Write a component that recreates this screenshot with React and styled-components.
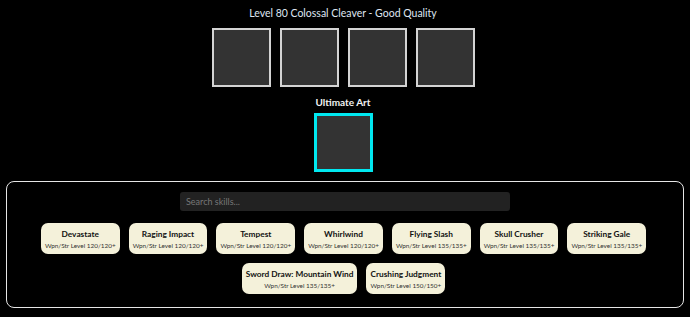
import React from "react";
import styled, { createGlobalStyle } from "styled-components";

const GlobalStyle = createGlobalStyle`
  html, body {
    margin: 0;
    background: #000;
    font-family: Lato, "Open Sans", sans-serif;
  }
`;

const Page = styled.div`
  display: flex;
  flex-direction: column;
  align-items: center;
  padding-top: 6px;
`;

const Header = styled.div`
  display: flex;
  flex-direction: column;
  align-items: center;
  padding-right: 4px;
`;

const Title = styled.div`
  color: #dfe6f2;
  font-size: 10.5px;
  line-height: 14px;
`;

const SlotRow = styled.div`
  display: flex;
  gap: 9px;
  margin-top: 8px;
`;

const Slot = styled.div`
  width: 59px;
  height: 59px;
  box-sizing: border-box;
  background: #333;
  border: ${(p) => (p.ultimate ? "3px solid #00e8f0" : "2px solid #d4d4d4")};
`;

const Label = styled.div`
  color: #f2f2f2;
  font-weight: 700;
  font-size: 10px;
  line-height: 14px;
  margin-top: 8px;
  margin-bottom: 4px;
`;

const Panel = styled.div`
  align-self: stretch;
  margin: 9px 6px 0;
  border: 1.5px solid #e6e6e6;
  border-radius: 8px;
  padding: 10px 20px 13px;
  display: flex;
  flex-direction: column;
  align-items: center;
  gap: 12px;
`;

const Search = styled.input`
  width: 330px;
  height: 19px;
  box-sizing: border-box;
  background: #222;
  border: none;
  border-radius: 3px;
  padding: 0 6px;
  color: #ccc;
  font-family: inherit;
  font-size: 9px;
  outline: none;
  &::placeholder {
    color: #777;
  }
`;

const CardGrid = styled.div`
  display: flex;
  flex-wrap: wrap;
  justify-content: center;
  gap: 9px;
  padding-right: 3px;
`;

const Card = styled.div`
  background: #f4f1da;
  border-radius: 7px;
  padding: 5px 4px 3px;
  display: flex;
  flex-direction: column;
  align-items: center;
  color: #111;
`;

const Name = styled.div`
  font-weight: 700;
  font-size: 8.3px;
  line-height: 12px;
`;

const Req = styled.div`
  font-size: 6.4px;
  line-height: 10px;
  color: #333;
  margin-top: 1px;
`;

const skills = [
  ["Devastate", "Wpn/Str Level 120/120+"],
  ["Raging Impact", "Wpn/Str Level 120/120+"],
  ["Tempest", "Wpn/Str Level 120/120+"],
  ["Whirlwind", "Wpn/Str Level 120/120+"],
  ["Flying Slash", "Wpn/Str Level 135/135+"],
  ["Skull Crusher", "Wpn/Str Level 135/135+"],
  ["Striking Gale", "Wpn/Str Level 135/135+"],
  ["Sword Draw: Mountain Wind", "Wpn/Str Level 135/135+"],
  ["Crushing Judgment", "Wpn/Str Level 150/150+"],
];

export default function App() {
  return (
    <>
      <GlobalStyle />
      <Page>
        <Header>
          <Title>Level 80 Colossal Cleaver - Good Quality</Title>
          <SlotRow>
            <Slot />
            <Slot />
            <Slot />
            <Slot />
          </SlotRow>
          <Label>Ultimate Art</Label>
          <Slot ultimate />
        </Header>
        <Panel>
          <Search placeholder="Search skills..." />
          <CardGrid>
            {skills.map(([name, req]) => (
              <Card key={name}>
                <Name>{name}</Name>
                <Req>{req}</Req>
              </Card>
            ))}
          </CardGrid>
        </Panel>
      </Page>
    </>
  );
}
